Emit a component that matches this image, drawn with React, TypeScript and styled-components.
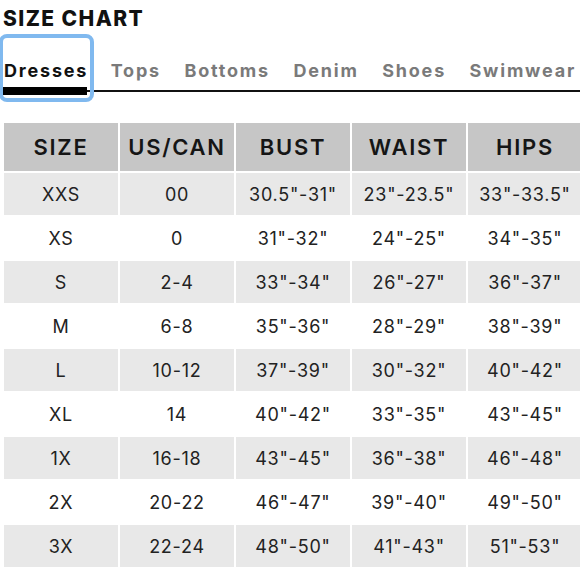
import React from 'react';
import styled, { createGlobalStyle } from 'styled-components';

const GlobalStyle = createGlobalStyle`
  body {
    margin: 0;
    background: #fff;
    font-family: Inter, "Liberation Sans", sans-serif;
  }
`;

const tabs = ['Dresses', 'Tops', 'Bottoms', 'Denim', 'Shoes', 'Swimwear'];
const columns = ['SIZE', 'US/CAN', 'BUST', 'WAIST', 'HIPS'];
const rows = [
  ['XXS', '00', '30.5"-31"', '23"-23.5"', '33"-33.5"'],
  ['XS', '0', '31"-32"', '24"-25"', '34"-35"'],
  ['S', '2-4', '33"-34"', '26"-27"', '36"-37"'],
  ['M', '6-8', '35"-36"', '28"-29"', '38"-39"'],
  ['L', '10-12', '37"-39"', '30"-32"', '40"-42"'],
  ['XL', '14', '40"-42"', '33"-35"', '43"-45"'],
  ['1X', '16-18', '43"-45"', '36"-38"', '46"-48"'],
  ['2X', '20-22', '46"-47"', '39"-40"', '49"-50"'],
  ['3X', '22-24', '48"-50"', '41"-43"', '51"-53"'],
];

const App: React.FC = () => {
  return (
    <Page>
      <GlobalStyle />
      <Title>SIZE CHART</Title>
      <TabBar>
        {tabs.map((t, i) => (
          <Tab key={t} $active={i === 0}>
            {t}
          </Tab>
        ))}
      </TabBar>

      <Table>
        <Row>
          {columns.map((c) => (
            <HeadCell key={c}>{c}</HeadCell>
          ))}
        </Row>
        {rows.map((r, i) => (
          <Row key={r[0]}>
            {r.map((v, j) => (
              <Cell key={j} $shaded={i % 2 === 0}>
                {v}
              </Cell>
            ))}
          </Row>
        ))}
      </Table>
    </Page>
  );
};

const Page = styled.div`
  width: 580px;
  height: 580px;
  overflow: hidden;
  box-sizing: border-box;
`;

const Title = styled.h1`
  margin: 0;
  padding: 7px 0 0 3px;
  font-size: 21px;
  line-height: 24px;
  font-weight: 800;
  color: #111;
  letter-spacing: 1.4px;
`;

const TabBar = styled.div`
  display: flex;
  align-items: flex-end;
  gap: 17.5px;
  margin-top: 7px;
  padding-left: 3px;
  border-bottom: 2px solid #111;
`;

const Tab = styled.div<{ $active: boolean }>`
  position: relative;
  margin-bottom: -8px;
  padding: 23px ${(p) => (p.$active ? '2px 17px 1px' : '3px 17px')};
  font-size: 18px;
  line-height: 20px;
  font-weight: 700;
  letter-spacing: 1.8px;
  white-space: nowrap;
  color: ${(p) => (p.$active ? '#111' : '#7a7a7a')};

  ${(p) =>
    p.$active &&
    `
    border-radius: 4px;
    box-shadow: 0 0 0 4px #80b9ef;
    &::after {
      content: '';
      position: absolute;
      left: 0;
      right: 3px;
      bottom: 3px;
      height: 8px;
      background: #000;
    }
  `}
`;

const Table = styled.div`
  display: flex;
  flex-direction: column;
  gap: 2px;
  margin-top: 31px;
  padding-left: 4px;
`;

const Row = styled.div`
  display: grid;
  grid-template-columns: repeat(5, 114px);
  gap: 2px;
`;

const HeadCell = styled.div`
  height: 48px;
  display: flex;
  align-items: center;
  justify-content: center;
  background: #c6c6c6;
  font-size: 22px;
  font-weight: 600;
  letter-spacing: 1.7px;
  color: #151515;
`;

const Cell = styled.div<{ $shaded: boolean }>`
  height: 42px;
  display: flex;
  align-items: center;
  justify-content: center;
  background: ${(p) => (p.$shaded ? '#e8e8e8' : '#fff')};
  font-size: 18px;
  letter-spacing: 0.75px;
  color: #222;
`;

export default App;
